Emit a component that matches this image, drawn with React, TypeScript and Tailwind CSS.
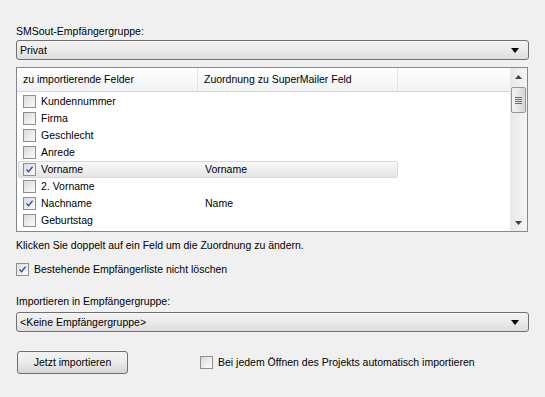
import React from 'react';

const rows = [
  { name: 'Kundennummer', checked: false, map: '' },
  { name: 'Firma', checked: false, map: '' },
  { name: 'Geschlecht', checked: false, map: '' },
  { name: 'Anrede', checked: false, map: '' },
  { name: 'Vorname', checked: true, map: 'Vorname', selected: true },
  { name: '2. Vorname', checked: false, map: '' },
  { name: 'Nachname', checked: true, map: 'Name' },
  { name: 'Geburtstag', checked: false, map: '' },
];

function Check({ checked }: { checked: boolean }) {
  return (
    <div className="w-[13px] h-[13px] border border-[#8f8f8f] bg-gradient-to-br from-[#dcdcdc] to-[#fbfbfb] p-[2px] shrink-0">
      <div className="w-full h-full bg-gradient-to-br from-[#dedede] to-[#f8f8f8] flex items-center justify-center">
        {checked && (
          <svg width="9" height="9" viewBox="0 0 9 9">
            <path d="M0.5 4.5 L3.3 7.3 L8.5 0.8" fill="none" stroke="#2a4cb4" strokeWidth="1.8" />
          </svg>
        )}
      </div>
    </div>
  );
}

function Combo({ text }: { text: string }) {
  return (
    <div className="h-[20px] mx-[16px] border border-[#707070] rounded-[3px] bg-gradient-to-b from-[#f2f2f2] via-[#ebebeb] to-[#dcdcdc] flex items-center pl-[3px] pr-[9px]">
      <span className="flex-1">{text}</span>
      <svg width="8" height="5" viewBox="0 0 8 5">
        <path d="M0 0 H8 L4 5 Z" fill="#000" />
      </svg>
    </div>
  );
}

export default function App() {
  return (
    <div className="w-[545px] h-[397px] bg-[#f0f0f0] text-[10.5px] text-black font-['Liberation_Sans',sans-serif] leading-none overflow-hidden">
      <div className="pt-[26px] pl-[16px] h-[40px]">SMSout-Empfängergruppe:</div>
      <Combo text="Privat" />

      {/* Feldliste */}
      <div className="mt-[7px] ml-[16px] w-[512px] h-[165px] border border-[#828790] bg-white flex">
        <div className="flex-1 flex flex-col">
          <div className="h-[24px] flex bg-gradient-to-b from-white to-[#f1f2f4] border-b border-[#d5d5d5]">
            <div className="w-[181px] pl-[6px] flex items-center border-r border-[#e3e4e6]">zu importierende Felder</div>
            <div className="w-[200px] pl-[6px] flex items-center border-r border-[#e3e4e6]">Zuordnung zu SuperMailer Feld</div>
          </div>
          <div className="pt-[1px]">
            {rows.map((r) => (
              <div
                key={r.name}
                className={`h-[17px] w-[380px] ml-[1px] flex items-center rounded-[2px] ${
                  r.selected ? 'bg-gradient-to-b from-[#f8f8f8] to-[#e5e5e5] border border-[#d9d9d9]' : 'border border-transparent'
                }`}
              >
                <div className="w-[181px] flex items-center pl-[4px] gap-[5px]">
                  <Check checked={r.checked} />
                  <span>{r.name}</span>
                </div>
                <div className="pl-[5px]">{r.map}</div>
              </div>
            ))}
          </div>
        </div>

        {/* Scrollbar */}
        <div className="w-[17px] bg-gradient-to-r from-[#e8e8e8] to-[#f5f5f5] flex flex-col items-center">
          <div className="h-[17px] flex items-center justify-center">
            <svg width="7" height="4" viewBox="0 0 7 4">
              <path d="M0 4 L3.5 0 L7 4 Z" fill="#404040" />
            </svg>
          </div>
          <div className="w-[15px] h-[26px] mt-[2px] border border-[#979797] rounded-[2px] bg-gradient-to-r from-[#f3f3f3] via-[#e6e6e6] to-[#d6d6d6] flex flex-col items-center justify-center gap-[1px]">
            <div className="w-[7px] h-px bg-[#6a6a6a]" />
            <div className="w-[7px] h-px bg-[#6a6a6a]" />
            <div className="w-[7px] h-px bg-[#6a6a6a]" />
            <div className="w-[7px] h-px bg-[#6a6a6a]" />
          </div>
          <div className="flex-1" />
          <div className="h-[17px] flex items-center justify-center">
            <svg width="7" height="4" viewBox="0 0 7 4">
              <path d="M0 0 L7 0 L3.5 4 Z" fill="#404040" />
            </svg>
          </div>
        </div>
      </div>

      <div className="pl-[16px] pt-[8px] h-[28px]">Klicken Sie doppelt auf ein Feld um die Zuordnung zu ändern.</div>
      <div className="pl-[16px] pt-[2px] flex items-center gap-[5px] h-[16px]">
        <Check checked={true} />
        <span>Bestehende Empfängerliste nicht löschen</span>
      </div>

      <div className="pl-[16px] pt-[20px] h-[36px]">Importieren in Empfängergruppe:</div>
      <Combo text="<Keine Empfängergruppe>" />

      <div className="mt-[19px] pl-[17px] flex items-center">
        <button className="w-[111px] h-[23px] border border-[#707070] rounded-[3px] bg-gradient-to-b from-[#f2f2f2] via-[#ebebeb] to-[#d6d6d6] text-[10.5px]">
          Jetzt importieren
        </button>
        <div className="ml-[72px] flex items-center gap-[5px]">
          <Check checked={false} />
          <span>Bei jedem Öffnen des Projekts automatisch importieren</span>
        </div>
      </div>
    </div>
  );
}
